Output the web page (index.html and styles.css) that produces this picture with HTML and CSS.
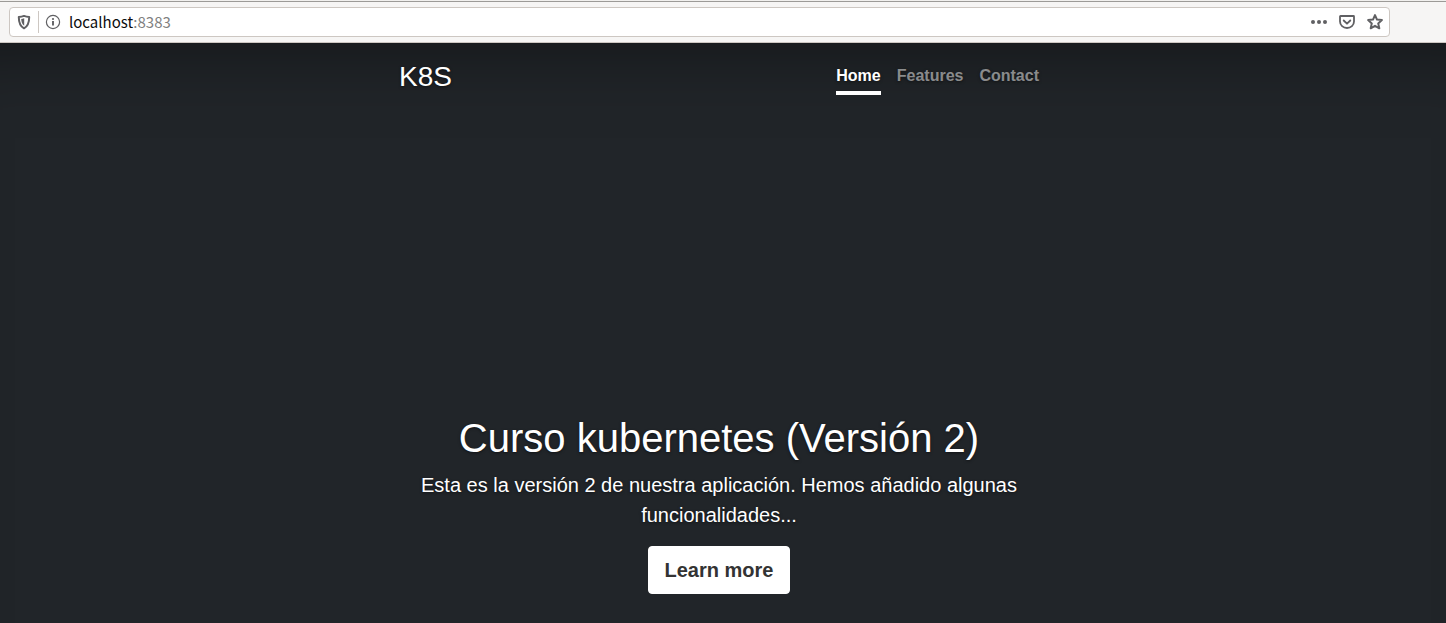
FILE: index.html
```html
<!DOCTYPE html>
<html lang="es">
<head>
<meta charset="utf-8">
<title>K8S</title>
<link rel="stylesheet" href="styles.css">
</head>
<body>
<div class="toolbar">
  <div class="urlbar">
    <button class="icon-btn shield" aria-label="Tracking protection">
      <svg width="16" height="16" viewBox="0 0 16 16"><path d="M8 1.900c1.700.6 3.500.9 5.200 1 0 5.800-1.200 9.200-5.200 11.400C4 12.100 2.800 8.700 2.800 2.900 4.500 2.800 6.300 2.500 8 1.900z" fill="none" stroke="#606063" stroke-width="2" stroke-linejoin="round"/><path d="M8.200 4.300v7.500C6.200 10.300 5.300 8 5.200 5 6.300 4.900 7.200 4.700 8.200 4.300z" fill="#606063"/></svg>
    </button>
    <span class="divider"></span>
    <button class="icon-btn info" aria-label="Site information">
      <svg width="16" height="16" viewBox="0 0 16 16"><circle cx="8" cy="8" r="6.600" fill="none" stroke="#606063" stroke-width="1.200"/><circle cx="8" cy="5" r="1.100" fill="#606063"/><path d="M8 7v4.500" stroke="#606063" stroke-width="1.900"/></svg>
    </button>
    <div class="address">localhost<span class="port">:8383</span></div>
    <div class="actions">
      <button class="icon-btn" aria-label="Page actions"><svg width="18" height="16" viewBox="0 0 18 16" fill="#606063"><circle cx="3" cy="8" r="2"/><circle cx="9" cy="8" r="2"/><circle cx="15" cy="8" r="2"/></svg></button>
      <button class="icon-btn" aria-label="Save to Pocket"><svg width="18" height="16" viewBox="0 0 18 16" fill="none" stroke="#606063" stroke-width="1.800" stroke-linecap="round" stroke-linejoin="round"><path d="M2.500 2h13q.5 0 .5.500v5a7 6.500 0 0 1-14 0v-5q0-.5.5-.5z"/><path d="M5.700 6.500 9 9.700l3.300-3.200"/></svg></button>
      <button class="icon-btn" aria-label="Bookmark this page"><svg width="18" height="16" viewBox="0 0 18 16" fill="none" stroke="#606063" stroke-width="2" stroke-linejoin="round"><path d="M9 1.100l2 4.500 4.900.5-3.700 3.300 1.100 4.900L9 11.800l-4.300 2.500 1.100-4.900L2.100 6.100 7 5.600z"/></svg></button>
    </div>
  </div>
</div>
<div class="page">
  <div class="cover">
    <header class="masthead">
      <h3 class="brand">K8S</h3>
      <nav class="nav">
        <a class="nav-link active" href="#">Home</a>
        <a class="nav-link" href="#">Features</a>
        <a class="nav-link" href="#">Contact</a>
      </nav>
    </header>
    <main class="inner">
      <h1 class="heading">Curso kubernetes (Versión 2)</h1>
      <p class="lead">Esta es la versión 2 de nuestra aplicación. Hemos añadido algunas funcionalidades...</p>
      <a class="btn" href="#">Learn more</a>
    </main>
  </div>
</div>
</body>
</html>
```
FILE: styles.css
```css
* { box-sizing: border-box; }
html, body { height: 100%; margin: 0; }
body {
  display: flex;
  flex-direction: column;
  overflow: hidden;
  font-family: "Liberation Sans", Arial, sans-serif;
  background: #212529;
}
.toolbar {
  flex: none;
  padding: 6px 56px 5px 9px;
  background: #f6f5f4;
  border-top: 1px solid #f1f0ee;
  border-bottom: 1px solid #cdc7c2;
  box-shadow: inset 0 1px #9c9a97;
}
.urlbar {
  display: flex;
  align-items: center;
  height: 30px;
  padding: 0 5px 0 6px;
  background: #fff;
  border: 1px solid #cdc7c2;
  border-radius: 4px;
}
.icon-btn {
  display: flex;
  padding: 0;
  border: 0;
  background: none;
}
.divider {
  width: 1px;
  height: 22px;
  margin: 0 6px;
  background: #cdc7c2;
}
.address {
  flex: 1;
  margin-left: 8px;
  font: 15px/24px "Noto Sans CJK SC", sans-serif;
  color: #0c0c0d;
}
.port { color: #808080; }
.actions { display: flex; gap: 10px; }
.page {
  flex: 1;
  display: flex;
  justify-content: center;
  padding-right: 8px;
  color: #fff;
  text-shadow: 0 1px 3px rgba(0, 0, 0, 0.5);
  box-shadow: inset 0 80px 80px -80px rgba(0, 0, 0, 0.5);
}
.cover {
  display: flex;
  flex-direction: column;
  justify-content: space-between;
  width: 100%;
  max-width: 672px;
  padding: 16px 16px 29px;
}
.masthead {
  display: flex;
  justify-content: space-between;
}
.brand { margin: 0; font-size: 28px; font-weight: 400; line-height: 36px; }
.nav { display: flex; gap: 16px; }
.nav-link {
  padding: 4px 0 2px;
  border-bottom: 4px solid transparent;
  color: rgba(255, 255, 255, 0.5);
  font-size: 16px;
  font-weight: 700;
  line-height: 26px;
  text-decoration: none;
}
.nav-link.active { color: #fff; border-bottom-color: #fff; }
.inner { padding: 0 16px; text-align: center; }
.heading { margin: 0 0 8px; font-size: 40px; font-weight: 400; line-height: 48px; }
.lead { margin: 0 0 16px; font-size: 20px; line-height: 30px; }
.btn {
  display: inline-block;
  padding: 8px 16px;
  border: 1px solid #fff;
  border-radius: 4px;
  background: #fff;
  color: #333;
  font-size: 20px;
  font-weight: 700;
  line-height: 30px;
  text-decoration: none;
  text-shadow: none;
}
```
